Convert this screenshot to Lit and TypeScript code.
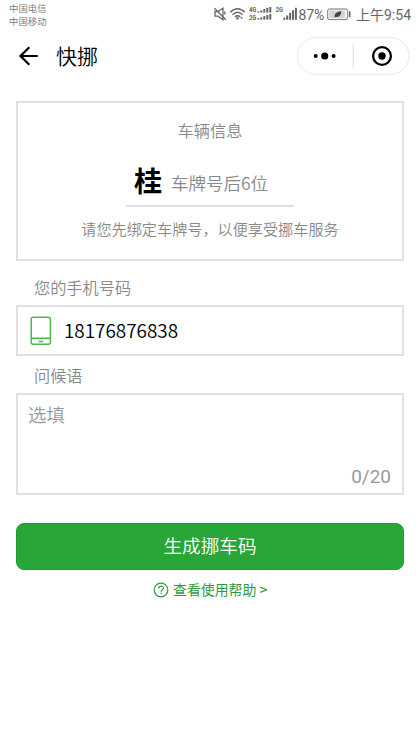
import { LitElement, html, css, svg } from "lit";
import { customElement, property } from "lit/decorators.js";

@customElement("status-bar")
class StatusBar extends LitElement {
  static styles = css`
    :host { display: flex; justify-content: space-between; height: 28px; box-sizing: border-box; padding: 2px 9px 0 9px; color: #666; }
    .carriers { font-size: 9.4px; line-height: 12.5px; color: #777; white-space: nowrap; }
    .right { display: flex; height: 26px; }
    .icons { width: 87px; height: 26px; }
    .pct { width: 27px; font: 14px/26px Roboto, sans-serif; white-space: nowrap; letter-spacing: -0.2px; text-indent: 0.6px; }
    .battery { width: 31px; height: 26px; }
    .time { font: 14px/26px Roboto, "Noto Sans CJK SC", sans-serif; white-space: nowrap; width: 55px; }
  `;

  private bars(x: number, bottom: number, width: number, gap: number, heights: number[]) {
    return heights.map((h, i) => svg`<rect x=${x + i * gap} y=${bottom - h} width=${width} height=${h} />`);
  }

  render() {
    return html`
      <div class="carriers"><div>中国电信</div><div>中国移动</div></div>
      <div class="right">
        <svg class="icons" viewBox="211 2 87 26" fill="#666">
          <g fill="none" stroke="#666" stroke-width="1.3">
            <path d="M215 11.5h3l5-3.300v11.600l-5-3.600h-3z" />
            <path d="M214.500 8.300l11.300 11.500M224.800 11.500v3" />
            <path d="M230.300 12.200q7.200-7 14.400 0M232.500 14.700q5-4.800 10 0M234.800 17q2.700-2.500 5.400 0" stroke-width="1.4" />
          </g>
          <circle cx="237.500" cy="18.300" r="1.200" />
          <path d="M240 18.600l1.600-1.800 1.600 1.800z" />
          <g font-family="Roboto" font-size="6.400" font-weight="700">
            <text x="249" y="12.300" textLength="7.300" lengthAdjust="spacingAndGlyphs">4G</text>
            <text x="249" y="19.900" textLength="7.300" lengthAdjust="spacingAndGlyphs">2G</text>
            <text x="275.700" y="12.300" textLength="7.300" lengthAdjust="spacingAndGlyphs">2G</text>
          </g>
          ${this.bars(257.3, 12.6, 2, 3, [1.3, 2.2, 3.5, 4.7, 5.6])}
          ${this.bars(257.3, 19.6, 2, 3, [1.3, 2.2, 3.5, 4.7, 5.6])}
          ${this.bars(283.3, 19.8, 2, 2.9, [2.2, 4.3, 7, 9.5, 12])}
        </svg>
        <span class="pct">87%</span>
        <svg class="battery" viewBox="326 2 31 26">
          <rect x="328.700" y="9" width="20" height="10.600" rx="1.500" fill="#f5f5f5" stroke="#777" stroke-width="1" />
          <rect x="330.300" y="10.600" width="15.500" height="7.400" fill="#d2d2d2" />
          <path d="M335.800 17.800c-.8-4 1.600-6 6.600-6.500c-.2 4-2.300 6.300-5.600 5.400l-1.200 1.600z" fill="#444" />
          <rect x="350" y="11.300" width="1.500" height="6" fill="#666" />
        </svg>
        <span class="time">上午9:54</span>
      </div>
    `;
  }
}

@customElement("nav-bar")
class NavBar extends LitElement {
  @property() heading = "";

  static styles = css`
    :host { display: flex; align-items: center; height: 56px; padding: 0 10px 0 18px; box-sizing: border-box; }
    .back { width: 21px; height: 22px; }
    .title { margin: -2px 0 0 17px; flex: 1; font-size: 21px; line-height: 30px; color: #000; font-weight: 350; }
    .capsule { width: 113px; height: 38px; }
  `;

  render() {
    return html`
      <svg class="back" viewBox="18 45 21 22" fill="none" stroke="#000" stroke-width="2.200">
        <path d="M37.800 56H20.500M29.300 47.200L20.500 56l8.800 8.800" />
      </svg>
      <span class="title">${this.heading}</span>
      <svg class="capsule" viewBox="297 37 113 38">
        <rect x="297.500" y="37.700" width="111.600" height="36.600" rx="18.300" fill="#fff" stroke="#e7e7e7" />
        <path d="M353.300 45v22" stroke="#ddd" />
        <circle cx="315.700" cy="56" r="2" />
        <circle cx="324.700" cy="56" r="3.600" />
        <circle cx="333.600" cy="56" r="2" />
        <circle cx="382" cy="56" r="8.900" fill="none" stroke="#000" stroke-width="2.300" />
        <circle cx="382" cy="56" r="3.700" />
      </svg>
    `;
  }
}

@customElement("app-root")
class AppRoot extends LitElement {
  static styles = css`
    :host { display: block; height: 747px; overflow: hidden; background: #fff; font-family: "Noto Sans CJK SC", sans-serif; font-weight: 350; }
    .page { padding: 17px 16px 0; }
    .box { box-sizing: border-box; border: 2px solid #e0e0e0; }
    .vehicle { height: 160px; display: flex; flex-direction: column; align-items: center; color: #888; white-space: nowrap; }
    .caption { margin-top: 15px; font-size: 16.2px; line-height: 24px; }
    .plate { margin-top: 18px; width: 168px; height: 47px; box-sizing: border-box; border-bottom: 2px solid #e0e0e0; display: flex; padding-left: 8px; }
    .province { font-size: 28px; line-height: 41px; font-weight: 700; color: #000; }
    .number { margin-left: 9px; font-size: 17.5px; line-height: 46px; }
    .tip { margin-top: 9px; font-size: 15.15px; line-height: 24px; }
    .label { padding-left: 18px; font-size: 16.2px; color: #888; }
    .label.tel { margin-top: 14px; height: 30px; line-height: 24px; }
    .label.greet { height: 37px; line-height: 38px; }
    .phone { height: 51px; display: flex; align-items: center; padding-left: 12px; font-size: 18.9px; line-height: 28px; color: #000; }
    .phone span { padding-bottom: 2px; }
    .device { width: 22px; height: 30px; margin-right: 12px; }
    .greeting { height: 102px; padding: 4px 11px 1px 10px; display: flex; flex-direction: column; justify-content: space-between; color: #999; font-size: 18.5px; line-height: 30px; }
    .count { align-self: flex-end; font-family: Roboto, sans-serif; font-size: 19px; font-weight: 400; }
    .submit { display: block; width: 100%; margin-top: 28px; height: 47px; padding: 0 0 4px; border: 1px solid #219a35; border-radius: 8px; background: #28a638; color: #fff; font: 350 18.6px/40px "Noto Sans CJK SC", sans-serif; }
    .help { display: flex; align-items: center; margin: 8px 0 0 137px; color: #2c9a3c; font-size: 13.9px; line-height: 24px; font-weight: 400; white-space: pre; }
    .help span { margin-top: -1px; }
    .help .more { font-weight: 500; }
    .question { width: 16px; height: 16px; margin-right: 4px; }
  `;

  render() {
    return html`
      <status-bar></status-bar>
      <nav-bar heading="快挪"></nav-bar>
      <main class="page">
        <section class="box vehicle">
          <div class="caption">车辆信息</div>
          <div class="plate"><span class="province">桂</span><span class="number">车牌号后6位</span></div>
          <div class="tip">请您先绑定车牌号，以便享受挪车服务</div>
        </section>
        <div class="label tel">您的手机号码</div>
        <div class="box phone">
          <svg class="device" viewBox="0 0 22 30" fill="none" stroke="#4cb84c" stroke-width="1.500">
            <rect x="1.200" y="1.300" width="19.200" height="27" rx="2" />
            <path d="M1.200 22.300h19.200M8.500 25.400h4.600" />
          </svg>
          <span>18176876838</span>
        </div>
        <div class="label greet">问候语</div>
        <div class="box greeting"><span>选填</span><span class="count">0/20</span></div>
        <button class="submit">生成挪车码</button>
        <div class="help">
          <svg class="question" viewBox="0 0 16 16" fill="none" stroke="#2c9a3c" stroke-width="1.200"><circle cx="8" cy="8" r="6.800" /><path d="M5.800 6.400c0-3 4.500-3 4.500-.2c0 1.700-2.300 1.700-2.300 3.500M8 10.800v1.300" /></svg><span>查看使用帮助</span><span class="more"> &gt;</span>
        </div>
      </main>
    `;
  }
}
